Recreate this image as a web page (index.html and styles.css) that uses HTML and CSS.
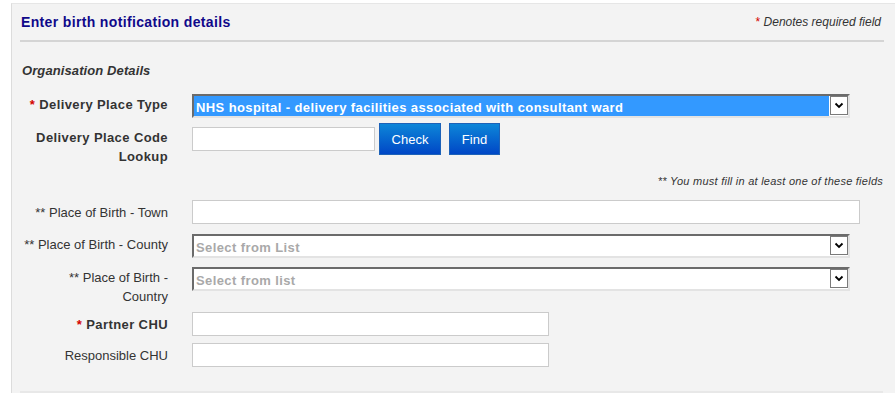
FILE: index.html
```html
<!DOCTYPE html>
<html lang="en">
<head>
  <meta charset="UTF-8" />
  <title>Enter birth notification details</title>
  <link rel="stylesheet" href="styles.css">
</head>
<body>

  <div class="panel">
    <div class="panel-head">
      <h2 class="panel-title">Enter birth notification details</h2>
      <p class="req-note"><span class="req">*</span> Denotes required field</p>
    </div>
    <div class="rule"></div>

    <h3 class="section-title">Organisation Details</h3>

    <div class="row row-type">
      <label class="lbl strong"><span class="req">*</span> Delivery Place Type</label>
      <div class="select selected">
        <span class="select-text">NHS hospital - delivery facilities associated with consultant ward</span>
        <span class="select-btn">
          <svg width="10" height="7" viewBox="0 0 10 7"><path d="M1.5 1.5 L5 5 L8.5 1.5" fill="none" stroke="#000" stroke-width="1.8"/></svg>
        </span>
      </div>
    </div>

    <div class="row row-lookup">
      <label class="lbl strong lbl-lookup">Delivery Place Code<br>Lookup</label>
      <div class="lookup">
        <input class="text text-code" type="text">
        <button class="btn btn-check">Check</button>
        <button class="btn btn-find">Find</button>
      </div>
    </div>

    <p class="hint">** You must fill in at least one of these fields</p>

    <div class="row row-town">
      <label class="lbl lbl-mid">** Place of Birth - Town</label>
      <input class="text text-wide" type="text">
    </div>

    <div class="row row-county">
      <label class="lbl lbl-top">** Place of Birth - County</label>
      <div class="select">
        <span class="select-text placeholder">Select from List</span>
        <span class="select-btn">
          <svg width="10" height="7" viewBox="0 0 10 7"><path d="M1.5 1.5 L5 5 L8.5 1.5" fill="none" stroke="#000" stroke-width="1.8"/></svg>
        </span>
      </div>
    </div>

    <div class="row row-country">
      <label class="lbl lbl-top">** Place of Birth -<br>Country</label>
      <div class="select">
        <span class="select-text placeholder">Select from list</span>
        <span class="select-btn">
          <svg width="10" height="7" viewBox="0 0 10 7"><path d="M1.5 1.5 L5 5 L8.5 1.5" fill="none" stroke="#000" stroke-width="1.8"/></svg>
        </span>
      </div>
    </div>

    <div class="row row-partner">
      <label class="lbl strong lbl-mid"><span class="req">*</span> Partner CHU</label>
      <input class="text text-half" type="text">
    </div>

    <div class="row row-resp">
      <label class="lbl lbl-mid">Responsible CHU</label>
      <input class="text text-half" type="text">
    </div>

    <div class="foot-rule"></div>
  </div>

</body>
</html>
```

FILE: styles.css
```css
body {
  margin: 0;
  background: #fff;
  font-family: "Liberation Sans", Arial, sans-serif;
  color: #333;
}

.panel {
  margin: 3px 0 0 11px;
  padding: 0 12px 0 9px;
  background: #f3f3f3;
  border-top: 1px solid #e6e6e6;
  border-left: 1px solid #dcdcdc;
  height: 400px;
}

.panel-head {
  display: flex;
  justify-content: space-between;
  align-items: center;
  margin-top: 10px;
  height: 16px;
}

.panel-title {
  margin: 0;
  font-size: 14px;
  line-height: 16px;
  font-weight: bold;
  letter-spacing: 0.35px;
  color: #10098a;
}

.req-note {
  margin: 0 2px 0 0;
  font-size: 12px;
  font-style: italic;
  color: #333;
}

.req {
  color: #d40000;
  font-style: normal;
}

.rule {
  margin: 10px -1px 0 -1px;
  border-top: 2px solid #d4d4d4;
}

.section-title {
  margin: 21px 0 0 1px;
  font-size: 13px;
  line-height: 16px;
  font-weight: bold;
  font-style: italic;
  letter-spacing: 0.1px;
  color: #333;
}

.row {
  display: grid;
  grid-template-columns: 147px auto;
  column-gap: 24px;
  align-items: start;
}

.lbl {
  text-align: right;
  font-size: 13px;
  line-height: 19px;
  color: #333;
}

.lbl.strong {
  font-weight: bold;
  letter-spacing: 0.4px;
}

.lbl-top { padding-top: 1px; }
.lbl-mid { padding-top: 3px; }
.lbl-lookup { padding-top: 5px; }

.row-type { margin-top: 15px; }
.row-type .lbl { padding-top: 1px; }
.row-lookup { margin-top: 5px; }
.row-town { margin-top: 12px; }
.row-county { margin-top: 10px; }
.row-country { margin-top: 9px; }
.row-partner { margin-top: 6px; }
.row-resp { margin-top: 7px; }

.select {
  display: flex;
  box-sizing: border-box;
  width: 658px;
  height: 24px;
  border-top: 2px solid #6b6b6b;
  border-left: 2px solid #6b6b6b;
  border-bottom: 2px solid #e3e3e3;
  border-right: 2px solid #e3e3e3;
  background: #fff;
}

.select-text {
  flex: 1;
  padding: 3px 0 0 2px;
  font-size: 13px;
  line-height: 17px;
  font-weight: bold;
  letter-spacing: 0.4px;
  white-space: nowrap;
  overflow: hidden;
}

.selected .select-text {
  background: #3399ff;
  color: #fff;
}

.select-text.placeholder {
  color: #a9a9a9;
}

.select-btn {
  display: flex;
  align-items: center;
  justify-content: center;
  box-sizing: border-box;
  width: 18px;
  height: 19px;
  margin-left: 1px;
  border: 1px solid #7a7a7a;
  background: #fff;
}

.lookup {
  display: flex;
  align-items: center;
}

.text {
  box-sizing: border-box;
  height: 24px;
  margin: 0;
  border: 1px solid #cbcbcb;
  background: #fff;
  padding: 0 4px;
  font-family: inherit;
  font-size: 13px;
}

.text-code { width: 183px; margin-right: 4px; }
.text-wide { width: 668px; }
.text-half { width: 357px; }

.btn {
  box-sizing: border-box;
  height: 32px;
  border: 1px solid #1d62b8;
  background: linear-gradient(#0d86d8, #0047c6);
  color: #fff;
  font-family: inherit;
  font-size: 13px;
  cursor: pointer;
}

.btn-check { width: 62px; }
.btn-find { width: 51px; margin-left: 8px; }

.hint {
  margin: 8px 0 0;
  text-align: right;
  font-size: 11px;
  line-height: 14px;
  font-style: italic;
  letter-spacing: 0.25px;
  color: #333;
}

.foot-rule {
  margin: 24px 0 0 -1px;
  border-top: 2px solid #e8e8e8;
}
```
